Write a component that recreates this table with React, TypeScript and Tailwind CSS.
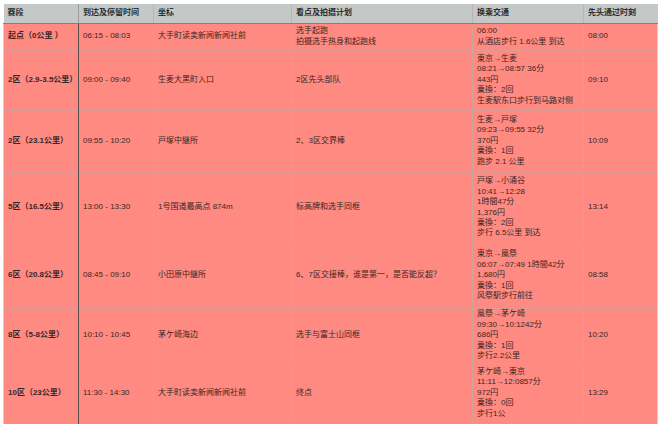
const headers = ['赛段', '到达及停留时间', '坐标', '看点及拍摄计划', '换乘交通', '先头通过时刻']

const colWidths = ['w-[75px]', 'w-[75px]', 'w-[138px]', 'w-[181px]', 'w-[111px]', 'w-[74px]']

type Row = {
  stage: string
  time: string
  place: string
  plan: string[]
  transit: string[]
  pass: string
  h: string
}

const rows: Row[] = [
  {
    stage: '起点（0公里 ）',
    time: '06:15 - 08:03',
    place: '大手町读卖新闻新闻社前',
    plan: ['选手起跑', '拍摄选手热身和起跑线'],
    transit: ['06:00', '从酒店步行 1.6公里 到达'],
    pass: '08:00',
    h: 'h-[27px]',
  },
  {
    stage: '2区（2.9-3.5公里）',
    time: '09:00 - 09:40',
    place: '生麦大黑町入口',
    plan: ['2区先头部队'],
    transit: ['東京→生麦', '08:21→08:57 36分', '443円', '乗換：2回', '生麦駅东口步行到马路对侧'],
    pass: '09:10',
    h: 'h-[60px]',
  },
  {
    stage: '2区（23.1公里）',
    time: '09:55 - 10:20',
    place: '戸塚中継所',
    plan: ['2、3区交界棒'],
    transit: ['生麦→戸塚', '09:23→09:55 32分', '370円', '乗換：1回', '跑步 2.1 公里'],
    pass: '10:09',
    h: 'h-[62px]',
  },
  {
    stage: '5区（16.5公里）',
    time: '13:00 - 13:30',
    place: '1号国道最高点 874m',
    plan: ['标高牌和选手同框'],
    transit: ['戸塚→小涌谷', '10:41→12:28', '1時間47分', '1,376円', '乗換：2回', '步行 6.5公里 到达'],
    pass: '13:14',
    h: 'h-[71px]',
  },
  {
    stage: '6区（20.8公里）',
    time: '08:45 - 09:10',
    place: '小田原中継所',
    plan: ['6、7区交接棒，谁是第一，是否能反超？'],
    transit: ['東京→風祭', '06:07→07:49 1時間42分', '1,680円', '乗換：1回', '风祭駅步行前往'],
    pass: '08:58',
    h: 'h-[65px]',
  },
  {
    stage: '8区（5-8公里）',
    time: '10:10 - 10:45',
    place: '茅ケ崎海边',
    plan: ['选手与富士山同框'],
    transit: ['風祭→茅ケ崎', '09:30→10:1242分', '686円', '乗換：1回', '步行2.2公里'],
    pass: '10:20',
    h: 'h-[55px]',
  },
  {
    stage: '10区（23公里）',
    time: '11:30 - 14:30',
    place: '大手町读卖新闻新闻社前',
    plan: ['终点'],
    transit: ['茅ケ崎→東京', '11:11→12:0857分', '972円', '乗換：0回', '步行1公'],
    pass: '13:29',
    h: 'h-[60px]',
  },
]

export default function App() {
  return (
    <div
      className="w-[660px] h-[427px] bg-white pt-[4px] pl-[3px] text-[8px] leading-[10.4px] text-[#3a2624]"
      style={{ fontFamily: '"Liberation Sans", "Noto Sans CJK SC", sans-serif' }}
    >
      <table className="table-fixed border-collapse w-[654px]">
        <thead>
          <tr className="h-[19px] bg-[#c4c8c7]">
            {headers.map((h, i) => (
              <th
                key={i}
                className={`${colWidths[i]} text-left font-bold text-[#2e2e2e] px-[4px] align-middle border-b border-b-[#7f8281] ${
                  i === 0 ? 'border-r border-r-[#9a9c9b]' : i < 5 ? 'border-r border-r-[#b3b7b6]' : ''
                }`}
              >
                {h}
              </th>
            ))}
          </tr>
        </thead>
        <tbody>
          {rows.map((r, i) => (
            <tr key={i} className={`${r.h} bg-[#ff8a81] border-b border-b-[#d99c96]`}>
              <td className="px-[4px] align-middle font-bold border-r border-r-[#5c4a48] border-l border-l-[#d8d0cf]">
                {r.stage}
              </td>
              <td className="px-[4px] align-middle border-r border-r-[#d4a09a]">{r.time}</td>
              <td className="px-[4px] align-middle border-r border-r-[#d4a09a]">{r.place}</td>
              <td className="px-[4px] align-middle border-r border-r-[#d4a09a]">
                {r.plan.map((p, j) => (
                  <div key={j}>{p}</div>
                ))}
              </td>
              <td className="px-[4px] align-middle border-r border-r-[#d4a09a]">
                {r.transit.map((t, j) => (
                  <div key={j}>{t}</div>
                ))}
              </td>
              <td className="px-[4px] align-middle border-r border-r-[#d8d0cf]">{r.pass}</td>
            </tr>
          ))}
        </tbody>
      </table>
    </div>
  )
}
